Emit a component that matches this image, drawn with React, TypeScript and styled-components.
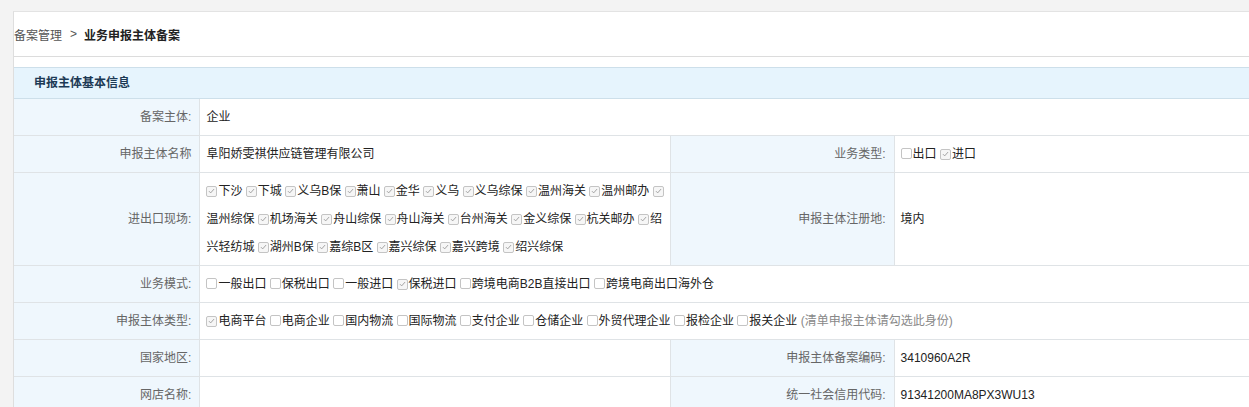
import React from 'react';
import styled, { createGlobalStyle } from 'styled-components';

const GlobalStyle = createGlobalStyle`
  html, body {
    margin: 0;
    padding: 0;
    background: #f3f3f3;
    overflow: hidden;
  }
  body {
    font-family: "Liberation Sans", "Noto Sans CJK SC", sans-serif;
    font-size: 12px;
    color: #333;
  }
`;

type Option = { label: string; checked?: boolean };

const sites: Option[] = [
  '下沙', '下城', '义乌B保', '萧山', '金华', '义乌', '义乌综保', '温州海关', '温州邮办',
  '温州综保', '机场海关', '舟山综保', '舟山海关', '台州海关', '金义综保', '杭关邮办',
  '绍兴轻纺城', '湖州B保', '嘉综B区', '嘉兴综保', '嘉兴跨境', '绍兴综保',
].map((label) => ({ label, checked: true }));

const modes: Option[] = [
  { label: '一般出口' },
  { label: '保税出口' },
  { label: '一般进口' },
  { label: '保税进口', checked: true },
  { label: '跨境电商B2B直接出口' },
  { label: '跨境电商出口海外仓' },
];

const roles: Option[] = [
  { label: '电商平台', checked: true },
  { label: '电商企业' },
  { label: '国内物流' },
  { label: '国际物流' },
  { label: '支付企业' },
  { label: '仓储企业' },
  { label: '外贸代理企业' },
  { label: '报检企业' },
  { label: '报关企业' },
];

const CheckList: React.FC<{ items: Option[] }> = ({ items }) => (
  <>
    {items.map((item, i) => (
      <React.Fragment key={item.label}>
        <Box $checked={item.checked}>
          {item.checked && (
            <svg viewBox="0 0 12 12" width="10" height="10">
              <path d="M2.6 6.2 L4.9 8.5 L9.4 3.4" fill="none" stroke="#9a9a9a" strokeWidth="1.2" />
            </svg>
          )}
        </Box>
        {item.label}
        {i < items.length - 1 ? ' ' : ''}
      </React.Fragment>
    ))}
  </>
);

const App: React.FC = () => {
  return (
    <Page>
      <GlobalStyle />
      <Panel>
        <Breadcrumb>
          <span>备案管理</span>
          <Sep>&gt;</Sep>
          <strong>业务申报主体备案</strong>
        </Breadcrumb>
        <Section>
          <SectionTitle>申报主体基本信息</SectionTitle>
          <Table>
            <colgroup>
              <col style={{ width: '15%' }} />
              <col style={{ width: '38%' }} />
              <col style={{ width: '18%' }} />
              <col style={{ width: '29%' }} />
            </colgroup>
            <tbody>
              <tr>
                <Label>备案主体:</Label>
                <Value colSpan={3}>企业</Value>
              </tr>
              <tr>
                <Label>申报主体名称</Label>
                <Value>阜阳娇雯祺供应链管理有限公司</Value>
                <Label>业务类型:</Label>
                <Value>
                  <CheckList items={[{ label: '出口' }, { label: '进口', checked: true }]} />
                </Value>
              </tr>
              <tr>
                <Label>进出口现场:</Label>
                <Value>
                  <CheckList items={sites} />
                </Value>
                <Label>申报主体注册地:</Label>
                <Value>境内</Value>
              </tr>
              <tr>
                <Label>业务模式:</Label>
                <Value colSpan={3}>
                  <CheckList items={modes} />
                </Value>
              </tr>
              <tr>
                <Label>申报主体类型:</Label>
                <Value colSpan={3}>
                  <CheckList items={roles} /> <Hint>(清单申报主体请勾选此身份)</Hint>
                </Value>
              </tr>
              <tr>
                <Label>国家地区:</Label>
                <Value />
                <Label>申报主体备案编码:</Label>
                <Value>3410960A2R</Value>
              </tr>
              <tr>
                <Label>网店名称:</Label>
                <Value />
                <Label>统一社会信用代码:</Label>
                <Value>91341200MA8PX3WU13</Value>
              </tr>
            </tbody>
          </Table>
        </Section>
      </Panel>
    </Page>
  );
};

export default App;

const Page = styled.div`
  padding: 11px 0 0 13px;
`;

const Panel = styled.div`
  width: 1241px;
  min-height: 420px;
  background: #fff;
  border-top: 1px solid #e3e3e3;
  border-left: 1px solid #dedede;
`;

const Breadcrumb = styled.div`
  display: flex;
  align-items: center;
  height: 44px;
  border-bottom: 1px solid #dcdcdc;
  color: #555;

  & > strong {
    color: #222;
    font-weight: bold;
  }
`;

const Sep = styled.span`
  margin: 0 7px 0 8px;
  color: #555;
`;

const Section = styled.div`
  margin-top: 10px;
`;

const SectionTitle = styled.div`
  height: 30px;
  line-height: 30px;
  padding-left: 20px;
  background: #e6f4fd;
  border-top: 1px solid #cddfea;
  border-bottom: 1px solid #cddfea;
  color: #1d3a55;
  font-weight: bold;
`;

const Table = styled.table`
  width: 1240px;
  border-collapse: collapse;
  table-layout: fixed;
`;

const Label = styled.td`
  padding: 4px 8px 4px 4px;
  line-height: 28px;
  text-align: right;
  color: #666;
  background: #eff7fd;
  border-bottom: 1px solid #dfe3e6;
  border-right: 1px solid #dfe3e6;
  vertical-align: middle;
  white-space: nowrap;
`;

const Value = styled.td`
  padding: 4px 4px 4px 6px;
  line-height: 28px;
  color: #222;
  background: #fff;
  border-bottom: 1px solid #dfe3e6;
  border-right: 1px solid #dfe3e6;
  vertical-align: middle;
`;

const Box = styled.span<{ $checked?: boolean }>`
  display: inline-flex;
  align-items: center;
  justify-content: center;
  box-sizing: border-box;
  width: 11px;
  height: 11px;
  margin-right: 1px;
  border: 1px solid #c4c4c4;
  border-radius: 2px;
  background: ${(p) => (p.$checked ? '#f6f6f6' : '#fff')};
  vertical-align: -1px;
`;

const Hint = styled.span`
  color: #888;
`;
